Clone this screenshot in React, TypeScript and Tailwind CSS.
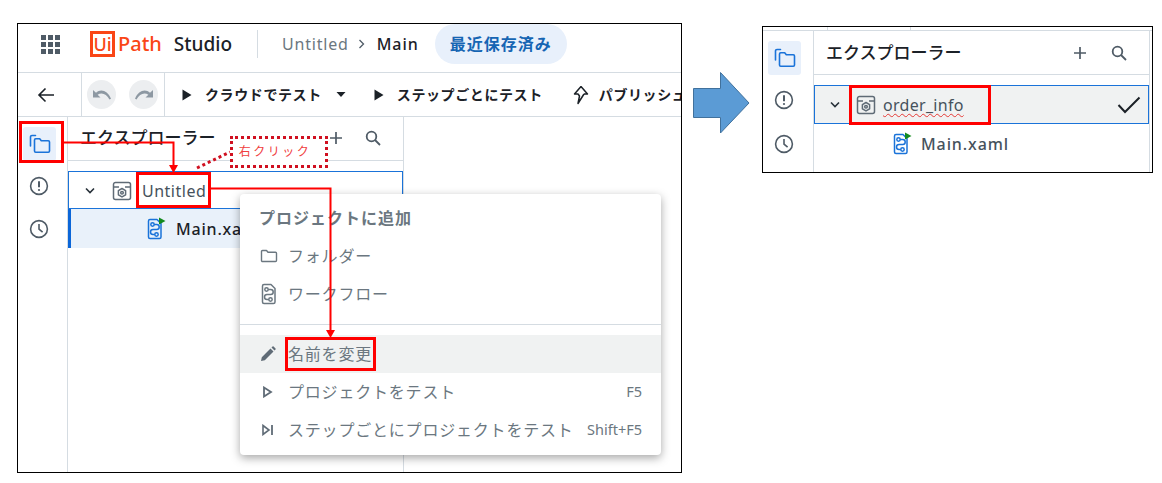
const FilesIcon = () => (
  <svg width="22" height="20" viewBox="0 0 22 20" fill="none" stroke="#1a73d9" strokeWidth="1.6">
    <path d="M6.500 1.500H3a1.500 1.500 0 0 0-1.500 1.500v9" strokeLinecap="round" />
    <path d="M5.500 6a1.200 1.200 0 0 1 1.200-1.200h4l1.600 2h7A1.200 1.200 0 0 1 20.500 8v9a1.200 1.200 0 0 1-1.200 1.200H6.700A1.200 1.200 0 0 1 5.500 17z" strokeLinejoin="round" />
  </svg>
);

const InfoIcon = () => (
  <svg width="20" height="20" viewBox="0 0 20 20" fill="none" stroke="#4f5b66" strokeWidth="1.6">
    <circle cx="10" cy="10" r="8.400" />
    <path d="M10 5.200v6" strokeWidth="2" />
    <circle cx="10" cy="14" r="1.100" fill="#4f5b66" stroke="none" />
  </svg>
);

const ClockIcon = () => (
  <svg width="20" height="20" viewBox="0 0 20 20" fill="none" stroke="#4f5b66" strokeWidth="1.6">
    <circle cx="10" cy="10" r="8.400" />
    <path d="M10 5v5.200l3.600 3" />
  </svg>
);

const SearchIcon = () => (
  <svg width="18" height="18" viewBox="0 0 18 18" fill="none" stroke="#4f5b66" strokeWidth="1.8">
    <circle cx="7.500" cy="7.500" r="4.800" />
    <path d="M11 11l5 5" />
  </svg>
);

const PlusIcon = () => (
  <svg width="14" height="14" viewBox="0 0 14 14" fill="none" stroke="#4f5b66" strokeWidth="1.7">
    <path d="M7 1v12M1 7h12" />
  </svg>
);

const Chevron = () => (
  <svg width="12" height="8" viewBox="0 0 12 8" fill="none" stroke="#273139" strokeWidth="1.6">
    <path d="M2 1.500l4 4 4-4" />
  </svg>
);

const ProjectIcon = () => (
  <svg width="20" height="20" viewBox="0 0 20 20" fill="none" stroke="#5f6b76" strokeWidth="1.5">
    <path d="M1.500 6V16.500a2 2 0 0 0 2 2h13a2 2 0 0 0 2-2V6" />
    <path d="M1.500 6V3.500a2 2 0 0 1 2-2h13a2 2 0 0 1 2 2V6" />
    <path d="M1.500 6H7M13 6h5.500" />
    <path d="M10 7.500l3.600 2.100v4.200L10 15.900l-3.600-2.100V9.600z" strokeLinejoin="round" />
    <circle cx="10" cy="11.700" r="1.300" />
  </svg>
);

const WorkflowIcon = ({ play = true, color = '#1a73d9' }: { play?: boolean; color?: string }) => (
  <svg width="20" height="24" viewBox="0 0 20 24" fill="none" stroke={color} strokeWidth="1.5">
    <path d="M2.500 4a1.500 1.500 0 0 1 1.500-1.500h7l4 4V20a1.500 1.500 0 0 1-1.500 1.500H4A1.500 1.500 0 0 1 2.500 20z" strokeLinejoin="round" />
    <circle cx="6.500" cy="7.500" r="1.700" />
    <circle cx="10.500" cy="17.500" r="1.700" />
    <path d="M8.200 7.500h2.500a2.500 2.500 0 0 1 0 5H7a2.500 2.500 0 0 0 0 5h1.800" />
    {play && <path d="M13 0.500l6.500 3.500L13 7.500z" fill="#138a1e" stroke="none" />}
  </svg>
);

const PlayIcon = () => (
  <svg width="10" height="12" viewBox="0 0 10 12">
    <path d="M0.500 0.500l9 5.500-9 5.500z" fill="#1b2127" />
  </svg>
);

const UndoIcon = ({ flip = false }: { flip?: boolean }) => (
  <div className="flex h-[29px] w-[29px] items-center justify-center rounded-full bg-[#eceef0]">
    <svg width="20" height="12" viewBox="0 0 20 12" className={flip ? '-scale-x-100' : ''}>
      <path d="M1 1v7.500h7.500L5.600 5.700C9.500 3 14.500 4.500 17.500 10.500l1.500-.7C15.500 1.500 8.800-.5 4 3.800z" fill="#8d98a2" />
    </svg>
  </div>
);

const MenuItem = ({
  icon,
  label,
  shortcut,
  active,
}: {
  icon: React.ReactNode;
  label: string;
  shortcut?: string;
  active?: boolean;
}) => (
  <div className={`flex h-[38px] items-center pl-[20px] pr-[19px] ${active ? 'bg-[#f0f2f2]' : ''}`}>
    <div className="flex w-[28px] shrink-0 items-center">{icon}</div>
    <span className="flex-1 whitespace-nowrap text-[16px] tracking-[0.8px] text-[#6b7780]">{label}</span>
    {shortcut && <span className="text-[14.5px] text-[#6b7780]">{shortcut}</span>}
  </div>
);

const ContextMenu = () => (
  <div className="absolute left-[222px] top-[170px] w-[421px] rounded-[4px] bg-white shadow-[0_3px_10px_rgba(0,0,0,0.35)]">
    <div className="flex h-[43px] items-center pl-[19px] pt-[5px] text-[16px] font-bold tracking-[1px] text-[#6b7780]">プロジェクトに追加</div>
    <MenuItem
      label="フォルダー"
      icon={
        <svg width="18" height="16" viewBox="0 0 18 16" fill="none" stroke="#6b7780" strokeWidth="1.4">
          <path d="M1.500 3.500a1 1 0 0 1 1-1h4l1.500 1.800h7.500a1 1 0 0 1 1 1v7.200a1 1 0 0 1-1 1h-13a1 1 0 0 1-1-1z" strokeLinejoin="round" />
        </svg>
      }
    />
    <MenuItem label="ワークフロー" icon={<WorkflowIcon play={false} color="#6b7780" />} />
    <div className="mb-[10px] mt-[11px] border-t border-[#d5dce2]" />
    <MenuItem
      active
      label="名前を変更"
      icon={
        <svg width="16" height="16" viewBox="0 0 16 16">
          <path d="M1 15l.8-3.800L10.500 2.500l3 3L4.800 14.200zM11.500 1.500l1-1a.8.8 0 0 1 1.100 0l1.900 1.900a.8.8 0 0 1 0 1.100l-1 1z" fill="#5f6b76" />
        </svg>
      }
    />
    <MenuItem
      label="プロジェクトをテスト"
      shortcut="F5"
      icon={
        <svg width="10" height="12" viewBox="0 0 10 12" className="ml-[3px]">
          <path d="M1 1.500l7 4.500-7 4.500z" fill="none" stroke="#5f6b76" strokeWidth="1.800" />
        </svg>
      }
    />
    <MenuItem
      label="ステップごとにプロジェクトをテスト"
      shortcut="Shift+F5"
      icon={
        <svg width="12" height="12" viewBox="0 0 12 12" className="ml-[2px]">
          <path d="M1 1.500l6 4.500-6 4.500z" fill="none" stroke="#5f6b76" strokeWidth="1.600" />
          <path d="M10 1v10" stroke="#5f6b76" strokeWidth="1.800" />
        </svg>
      }
    />
    <div className="h-[6px]" />
  </div>
);

const Annotations = () => (
  <>
    <svg className="absolute left-0 top-0" width="664" height="448" viewBox="0 0 664 448" fill="none">
      <path d="M46 118.500H155.500V142" stroke="#f00" strokeWidth="2" />
      <path d="M151 141h9l-4.500 8z" fill="#f00" />
      <path d="M193 164.500H312.500V308" stroke="#f00" strokeWidth="2" />
      <path d="M308 306h9l-4.500 8z" fill="#f00" />
      <path d="M179 144L212 128" stroke="#d01020" strokeWidth="3" strokeDasharray="3 3" />
    </svg>
    <div className="absolute left-[1px] top-[97px] h-[42px] w-[45px] border-[3px] border-[#f00]" />
    <div className="absolute left-[118px] top-[148px] h-[36px] w-[75px] border-[3px] border-[#f00]" />
    <div className="absolute left-[267px] top-[313px] h-[34px] w-[91px] border-[3px] border-[#f00]" />
    <div className="absolute left-[212px] top-[112px] flex h-[32px] w-[98px] items-center justify-center border-[3px] border-dotted border-[#d01020] bg-white pr-[8px] text-[12px] tracking-[2.500px] text-[#f04040]">
      右クリック
    </div>
  </>
);

const ToolbarAction = ({ label, className }: { label: string; className: string }) => (
  <div className={`flex shrink-0 items-center ${className}`}>
    <PlayIcon />
    <span className="ml-[13px] whitespace-nowrap text-[14px] font-bold tracking-[0.6px] text-[#1b2127]">{label}</span>
  </div>
);

const LeftFrame = () => (
  <div className="relative ml-[17px] mt-[23px] h-[450px] w-[665px] shrink-0 overflow-hidden border border-black bg-white">
    <header className="flex h-[49px] items-center border-b border-[#d5dce2] pb-[8px]">
      <div className="ml-[23px] grid grid-cols-3 gap-[2px]">
        {Array.from({ length: 9 }).map((_, i) => (
          <span key={i} className="h-[5px] w-[5px] bg-[#4f5b66]" />
        ))}
      </div>
      <div className="ml-[30px] flex h-[26px] w-[25px] items-center justify-center border-[3px] border-[#fa4616] text-[18px] font-medium leading-none text-[#fa4616]">Ui</div>
      <span className="ml-[3px] text-[20px] font-medium text-[#fa4616]">Path</span>
      <span className="ml-[12px] text-[19px] font-medium text-[#1b2127]">Studio</span>
      <div className="ml-[25px] h-[28px] w-px bg-[#d5dce2]" />
      <span className="ml-[24px] text-[16px] tracking-[0.8px] text-[#6b7780]">Untitled</span>
      <svg className="ml-[9px]" width="8" height="12" viewBox="0 0 8 12" fill="none" stroke="#4f5b66" strokeWidth="1.300">
        <path d="M1.500 2l4 4-4 4" />
      </svg>
      <span className="ml-[11px] text-[16px] font-medium tracking-[1px] text-[#1b2127]">Main</span>
      <div className="ml-[16px] flex h-[40px] w-[132px] items-center justify-center rounded-full bg-[#e8f0fb] text-[16px] font-bold tracking-[1px] text-[#1665b3]">最近保存済み</div>
    </header>
    <div className="flex h-[44px] items-center border-b border-[#d5dce2]">
      <div className="flex h-full w-[64px] shrink-0 items-center justify-center border-r border-[#d5dce2]">
        <svg className="ml-[-8px]" width="18" height="16" viewBox="0 0 18 16" fill="none" stroke="#1b2127" strokeWidth="1.600">
          <path d="M17 8H2M8.500 1.500L2 8l6.500 6.500" />
        </svg>
      </div>
      <div className="flex h-full w-[83px] shrink-0 items-center gap-[13px] border-r border-[#d5dce2] pl-[5px]">
        <UndoIcon />
        <UndoIcon flip />
      </div>
      <ToolbarAction label="クラウドでテスト" className="ml-[17px]" />
      <svg className="ml-[14px] shrink-0" width="10" height="5" viewBox="0 0 10 5">
        <path d="M0.500 0h9L5 5z" fill="#1b2127" />
      </svg>
      <ToolbarAction label="ステップごとにテスト" className="ml-[28px]" />
      <svg className="ml-[30px] shrink-0" width="16" height="20" viewBox="0 0 16 20" fill="none" stroke="#1b2127" strokeWidth="1.500">
        <path d="M8 1.500L14.500 9H11M8 1.500L1.500 9H5l1.500 2L5 18.500l6-9.500" strokeLinejoin="round" />
      </svg>
      <span className="ml-[10px] whitespace-nowrap text-[14px] font-bold tracking-[0.6px] text-[#1b2127]">パブリッシュ</span>
    </div>
    <div className="flex h-[355px]">
      <aside className="flex w-[50px] shrink-0 flex-col items-start border-r border-[#d5dce2] pl-[5px] pt-[10px]">
        <div className="flex h-[34px] w-[33px] items-center justify-center rounded-[3px] bg-[#e8f0fb]">
          <FilesIcon />
        </div>
        <div className="ml-[6px] mt-[15px]"><InfoIcon /></div>
        <div className="ml-[6px] mt-[23px]"><ClockIcon /></div>
      </aside>
      <section className="w-[336px] shrink-0 border-r border-[#d5dce2]">
        <div className="flex h-[44px] items-center border-b border-[#d5dce2] pb-[2px]">
          <span className="ml-[12px] text-[17px] font-medium text-[#1b2127]">エクスプローラー</span>
          <div className="ml-[113px]"><PlusIcon /></div>
          <div className="ml-[21px]"><SearchIcon /></div>
        </div>
        <div className="mt-[10px] flex h-[38px] items-center border border-[#1a73d9] pl-[15px] pt-[2px]">
          <Chevron />
          <div className="ml-[16px]"><ProjectIcon /></div>
          <span className="ml-[10px] text-[16px] tracking-[0.5px] text-[#46525c]">Untitled</span>
        </div>
        <div className="flex h-[39px] items-center border-l-[3px] border-[#0b66d8] bg-[#e9f1fa] pl-[75px]">
          <WorkflowIcon />
          <span className="ml-[10px] text-[16px] font-medium tracking-[0.8px] text-[#1b2127]">Main.xaml</span>
        </div>
      </section>
    </div>
    <ContextMenu />
    <Annotations />
  </div>
);

const RightFrame = () => (
  <div className="relative ml-[80px] mt-[26px] h-[147px] w-[391px] shrink-0 overflow-hidden border border-black bg-white">
    <div className="flex h-[4px] border-b border-[#d5dce2]">
      <div className="w-[65px] border-r border-[#d5dce2]" />
      <div className="w-[83px] border-r border-[#d5dce2]" />
    </div>
    <div className="flex h-[141px]">
      <aside className="flex w-[51px] shrink-0 flex-col items-start border-r border-[#d5dce2] pl-[5px] pt-[10px]">
        <div className="flex h-[34px] w-[33px] items-center justify-center rounded-[3px] bg-[#e8f0fb]">
          <FilesIcon />
        </div>
        <div className="ml-[6px] mt-[15px]"><InfoIcon /></div>
        <div className="ml-[6px] mt-[24px]"><ClockIcon /></div>
      </aside>
      <section className="w-[336px] shrink-0 border-r border-[#d5dce2]">
        <div className="flex h-[44px] items-center border-b border-[#d5dce2]">
          <span className="ml-[12px] text-[17px] font-medium text-[#1b2127]">エクスプローラー</span>
          <div className="ml-[111px]"><PlusIcon /></div>
          <div className="ml-[23px]"><SearchIcon /></div>
        </div>
        <div className="mt-[10px] flex h-[39px] items-center border border-[#1a73d9] bg-[#f0f2f2] pl-[14px]">
          <Chevron />
          <div className="ml-[15px]"><ProjectIcon /></div>
          <span className="ml-[7px] text-[16px] tracking-[0.3px] text-[#46525c] underline decoration-[#e53935] decoration-wavy decoration-1 underline-offset-2">order_info</span>
          <svg className="ml-auto mr-[7px]" width="24" height="18" viewBox="0 0 24 18" fill="none" stroke="#1b2127" strokeWidth="2">
            <path d="M1.500 9l6.500 7L22.500 1.500" />
          </svg>
        </div>
        <div className="flex h-[38px] items-center pl-[78px] pt-[1px]">
          <WorkflowIcon />
          <span className="ml-[9px] text-[16px] font-medium tracking-[0.9px] text-[#46525c]">Main.xaml</span>
        </div>
      </section>
    </div>
    <div className="absolute left-[86px] top-[58px] h-[40px] w-[142px] border-[3px] border-[#f00]" />
  </div>
);

export default function App() {
  return (
    <div className="flex h-[483px] w-[1162px] items-start overflow-hidden bg-white font-['Noto_Sans','Noto_Sans_CJK_JP',sans-serif]">
      <LeftFrame />
      <svg className="ml-[11px] mr-[-68px] mt-[72px] shrink-0" width="57" height="62" viewBox="0 0 57 62">
        <path d="M0.500 16.500H27.500V0.500L56 31 27.500 61V45.500H0.500z" fill="#5b9bd5" stroke="#41719c" />
      </svg>
      <RightFrame />
    </div>
  );
}
